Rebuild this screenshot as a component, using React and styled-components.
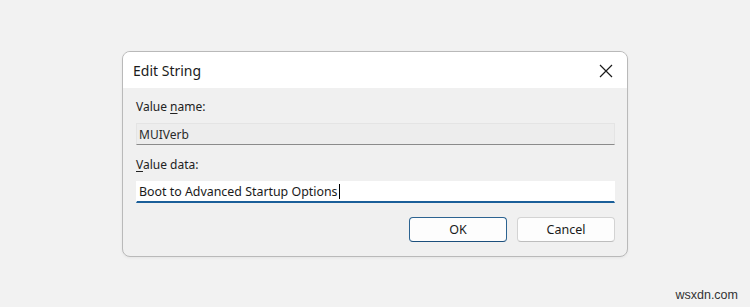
import React from "react";
import styled, { createGlobalStyle } from "styled-components";

const Global = createGlobalStyle`
  html, body {
    margin: 0;
    padding: 0;
    background: #f2f2f2;
  }
  body {
    font-family: "Noto Sans", "Open Sans", sans-serif;
    color: #1a1a1a;
  }
`;

const Page = styled.div`
  width: 750px;
  height: 307px;
  box-sizing: border-box;
  padding-top: 51px;
  display: flex;
  flex-direction: column;
  background: #f2f2f2;
  overflow: hidden;
`;

const Dialog = styled.div`
  margin-left: 122px;
  width: 506px;
  height: 206px;
  box-sizing: border-box;
  border: 1px solid #b9b9b9;
  border-radius: 8px;
  background: #f0f0f0;
  overflow: hidden;
  display: flex;
  flex-direction: column;
  box-shadow: 0 1px 3px rgba(0, 0, 0, 0.06);
`;

const TitleBar = styled.div`
  height: 36px;
  flex-shrink: 0;
  background: #ffffff;
  display: flex;
  align-items: center;
  justify-content: space-between;
  padding: 0 13px 0 10px;
`;

const Title = styled.span`
  font-size: 14px;
  color: #1b1b1b;
  padding-top: 1px;
`;

const Close = styled.button`
  border: 0;
  background: transparent;
  padding: 0;
  width: 16px;
  height: 16px;
  display: grid;
  place-items: center;
  margin-top: 1px;
`;

const Body = styled.div`
  flex: 1;
  padding: 11px 12px 0 13px;
  display: flex;
  flex-direction: column;
`;

const Label = styled.div`
  font-size: 12px;
  line-height: 16px;
  color: #222;
  margin-top: ${(p) => (p.$first ? "0" : "12px")};
  margin-bottom: 8px;

  u {
    text-decoration-thickness: 1px;
    text-underline-offset: 2px;
  }
`;

const Field = styled.div`
  height: 22px;
  box-sizing: border-box;
  display: flex;
  align-items: center;
  padding: 0 4px 0 2px;
  font-size: ${(p) => (p.$active ? "12.4px" : "12px")};
  color: ${(p) => (p.$active ? "#1a1a1a" : "#2a2a2a")};
  background: ${(p) => (p.$active ? "#ffffff" : "#ededed")};
  border: 1px solid ${(p) => (p.$active ? "#ffffff" : "#e4e4e4")};
  border-bottom: ${(p) => (p.$active ? "2px solid #1b5f99" : "1px solid #8b8b8b")};
`;

const Caret = styled.span`
  display: inline-block;
  width: 1px;
  height: 15px;
  background: #000;
  margin-left: 1px;
`;

const Actions = styled.div`
  margin-top: 14px;
  display: flex;
  justify-content: flex-end;
  gap: 10px;
`;

const Button = styled.button`
  width: 98px;
  height: 25px;
  box-sizing: border-box;
  border-radius: 4px;
  font-family: inherit;
  font-size: 12.5px;
  color: #1a1a1a;
  background: #fdfdfd;
  border: 1px solid ${(p) => (p.$primary ? "#2c6391" : "#d3d3d3")};
  border-bottom-color: ${(p) => (p.$primary ? "#1c4f7c" : "#bdbdbd")};
`;

const Footer = styled.div`
  margin-top: auto;
  display: flex;
  justify-content: flex-end;
  padding: 0 12px 5px 0;
`;

const Watermark = styled.span`
  font-size: 12.5px;
  color: #333;
  font-family: "Liberation Sans", Arial, sans-serif;
`;

export default function App() {
  return (
    <>
      <Global />
      <Page>
        <Dialog>
          <TitleBar>
            <Title>Edit String</Title>
            <Close aria-label="Close">
              <svg width="14" height="14" viewBox="0 0 14 14">
                <path d="M1 1L13 13M13 1L1 13" stroke="#1a1a1a" strokeWidth="1.2" fill="none" />
              </svg>
            </Close>
          </TitleBar>
          <Body>
            <Label $first>
              Value <u>n</u>ame:
            </Label>
            <Field>MUIVerb</Field>
            <Label>
              <u>V</u>alue data:
            </Label>
            <Field $active>
              Boot to Advanced Startup Options
              <Caret />
            </Field>
            <Actions>
              <Button $primary>OK</Button>
              <Button>Cancel</Button>
            </Actions>
          </Body>
        </Dialog>
        <Footer>
          <Watermark>wsxdn.com</Watermark>
        </Footer>
      </Page>
    </>
  );
}
